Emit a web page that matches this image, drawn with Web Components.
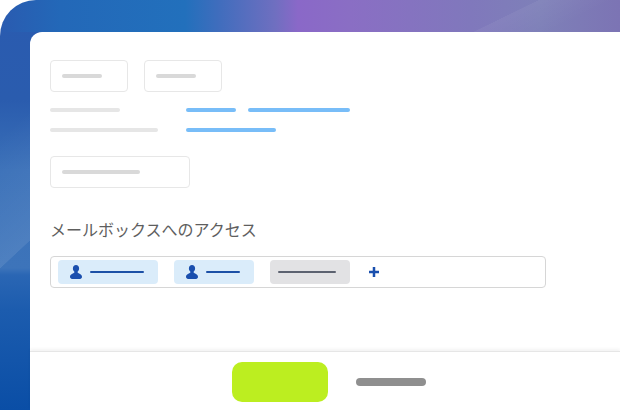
<!DOCTYPE html>
<html lang="ja">
<head>
<meta charset="utf-8">
<title>mailbox access</title>
<style>
  html, body { margin: 0; height: 100%; background: #fff; overflow: hidden; }
</style>
</head>
<body>
<app-window>
  <form-card>
    <div slot="top" class="group">
      <mock-field width="78" bar="40"></mock-field>
      <mock-field width="78" bar="40"></mock-field>
    </div>
    <info-row slot="rows">
      <mock-bar slot="label" w="70" color="#e6e6e6"></mock-bar>
      <mock-bar w="50" color="#78bdf8"></mock-bar>
      <mock-bar w="102" color="#78bdf8"></mock-bar>
    </info-row>
    <info-row slot="rows">
      <mock-bar slot="label" w="108" color="#e6e6e6"></mock-bar>
      <mock-bar w="90" color="#78bdf8"></mock-bar>
    </info-row>
    <mock-field slot="single" width="140" bar="78"></mock-field>
    <span slot="heading">メールボックスへのアクセス</span>
    <access-chip slot="chips" width="100" line="54"></access-chip>
    <access-chip slot="chips" width="80" line="34"></access-chip>
    <access-chip slot="chips" width="80" line="58" muted></access-chip>
    <add-icon slot="chips"></add-icon>
  </form-card>
</app-window>

<script>
// small pieces first, then the card and the window round them

class MockBar extends HTMLElement {
  constructor() {
    super();
    this.attachShadow({ mode: 'open' });
    const w = this.getAttribute('w') || 40;
    const h = this.getAttribute('h') || 4;
    const color = this.getAttribute('color') || '#d8d8d8';
    this.shadowRoot.innerHTML = `
      <style>
        :host {
          display: block;
          flex: none;
          width: ${w}px;
          height: ${h}px;
          border-radius: ${h / 2}px;
          background: ${color};
        }
      </style>
    `;
  }
}

class MockField extends HTMLElement {
  constructor() {
    super();
    this.attachShadow({ mode: 'open' });
    this.shadowRoot.innerHTML = `
      <style>
        :host {
          display: flex;
          align-items: center;
          box-sizing: border-box;
          width: ${this.getAttribute('width')}px;
          height: 32px;
          padding-left: 11px;
          border: 1px solid #e7e7e7;
          border-radius: 4px;
          background: #fff;
        }
      </style>
      <mock-bar w="${this.getAttribute('bar')}" color="#d9d9d9"></mock-bar>
    `;
  }
}

class InfoRow extends HTMLElement {
  constructor() {
    super();
    this.attachShadow({ mode: 'open' });
    this.shadowRoot.innerHTML = `
      <style>
        :host { display: grid; grid-template-columns: 136px 1fr; }
        .values { display: flex; gap: 12px; }
      </style>
      <slot name="label"></slot>
      <div class="values"><slot></slot></div>
    `;
  }
}

class AccessChip extends HTMLElement {
  constructor() {
    super();
    this.attachShadow({ mode: 'open' });
    const muted = this.hasAttribute('muted');
    const lineColor = muted ? '#5c6270' : '#1c50a6';
    this.shadowRoot.innerHTML = `
      <style>
        :host {
          display: flex;
          align-items: center;
          gap: 8px;
          box-sizing: border-box;
          width: ${this.getAttribute('width')}px;
          height: 24px;
          padding-left: ${muted ? 8 : 12}px;
          border-radius: 4px;
          background: ${muted ? '#e2e2e4' : '#daecfa'};
        }
        svg { display: block; flex: none; }
      </style>
      ${muted ? '' : `<svg width="12" height="14" viewBox="0 0 12 14">
        <path fill="#1a4fae" d="M6 0C4.100 0 2.900 1.400 2.900 3.400c0 1.300.6 2.500 1.400 3.100v1.200C2.800 8.500 0 9.300 0 11.700 0 13.100 1 13.900 2 13.900h8c1 0 2-.8 2-2.200 0-2.400-2.800-3.200-4.300-4V6.500c.8-.6 1.400-1.800 1.400-3.100C9.100 1.400 7.900 0 6 0z"/>
      </svg>`}
      <mock-bar w="${this.getAttribute('line')}" h="2" color="${lineColor}"></mock-bar>
    `;
  }
}

class AddIcon extends HTMLElement {
  constructor() {
    super();
    this.attachShadow({ mode: 'open' });
    this.shadowRoot.innerHTML = `
      <style>
        :host { display: block; margin-left: 3px; }
        svg { display: block; }
      </style>
      <svg width="10" height="10" viewBox="0 0 10 10">
        <path fill="#1a4fae" d="M3.750 0h2.500v3.750H10v2.500H6.250V10h-2.500V6.250H0v-2.500h3.750z"/>
      </svg>
    `;
  }
}

class FormCard extends HTMLElement {
  constructor() {
    super();
    this.attachShadow({ mode: 'open' });
    this.shadowRoot.innerHTML = `
      <style>
        :host {
          display: flex;
          flex-direction: column;
          flex: 1;
          min-width: 0;
          border-top-left-radius: 12px;
          background: #fff;
        }
        .body { flex: 1; padding: 28px 0 0 20px; }
        .top { display: flex; gap: 16px; }
        ::slotted(.group) { display: flex; gap: 16px; }
        .rows { display: flex; flex-direction: column; gap: 16px; margin: 16px 0 24px; }
        h2 {
          margin: 29px 0 15px;
          font: 400 16px/24px "Noto Sans CJK JP", "Noto Sans", sans-serif;
          color: #5e5e5e;
        }
        .chips {
          display: flex;
          align-items: center;
          gap: 16px;
          box-sizing: border-box;
          width: 496px;
          height: 32px;
          padding-left: 7px;
          border: 1px solid #d6d6d6;
          border-radius: 4px;
        }
        footer {
          display: flex;
          align-items: flex-start;
          justify-content: center;
          gap: 28px;
          box-sizing: border-box;
          height: 59px;
          padding: 10px 0 0 8px;
          border-top: 1px solid #e6e6e6;
          box-shadow: 0 -2px 3px rgba(0, 0, 0, .05);
        }
        .primary { width: 96px; height: 40px; border-radius: 10px; background: #bcee20; }
        .secondary { margin-top: 16px; }
      </style>
      <div class="body">
        <div class="top"><slot name="top"></slot></div>
        <div class="rows"><slot name="rows"></slot></div>
        <slot name="single"></slot>
        <h2><slot name="heading"></slot></h2>
        <div class="chips"><slot name="chips"></slot></div>
      </div>
      <footer>
        <div class="primary"></div>
        <mock-bar class="secondary" w="70" h="8" color="#8f8f8f"></mock-bar>
      </footer>
    `;
  }
}

class AppWindow extends HTMLElement {
  constructor() {
    super();
    this.attachShadow({ mode: 'open' });
    this.shadowRoot.innerHTML = `
      <style>
        :host {
          display: flex;
          box-sizing: border-box;
          height: 100vh;
          padding: 32px 0 0 30px;
          border-top-left-radius: 36px;
          background:
            linear-gradient(154deg, transparent 48.5%, rgba(255,255,255,.05) 48.8%, transparent 75%) 400px 0 / 220px 32px no-repeat,
            linear-gradient(137deg, transparent 100px, rgba(255,255,255,.09) 196px, transparent 196.6px) 0 0 / 30px 100% no-repeat,
            linear-gradient(90deg, #2a5bb0 0, #2368b8 60px, #2270bc 185px, #3f6dbd 218px, #6f6fc0 275px, #8a68c8 298px, #8a6ec4 350px, #8078bc 470px, #7e80b8 540px, #7c74b4 620px) 0 0 / 100% 32px no-repeat,
            linear-gradient(180deg, #2a5bb0 0, #2a5cae 100px, #3a70b8 170px, #3d74ba 268px, #2a66b4 275px, #1c5cae 310px, #0a4ea6 410px);
        }
      </style>
      <slot></slot>
    `;
  }
}

customElements.define('mock-bar', MockBar);
customElements.define('mock-field', MockField);
customElements.define('info-row', InfoRow);
customElements.define('access-chip', AccessChip);
customElements.define('add-icon', AddIcon);
customElements.define('form-card', FormCard);
customElements.define('app-window', AppWindow);
</script>
</body>
</html>
